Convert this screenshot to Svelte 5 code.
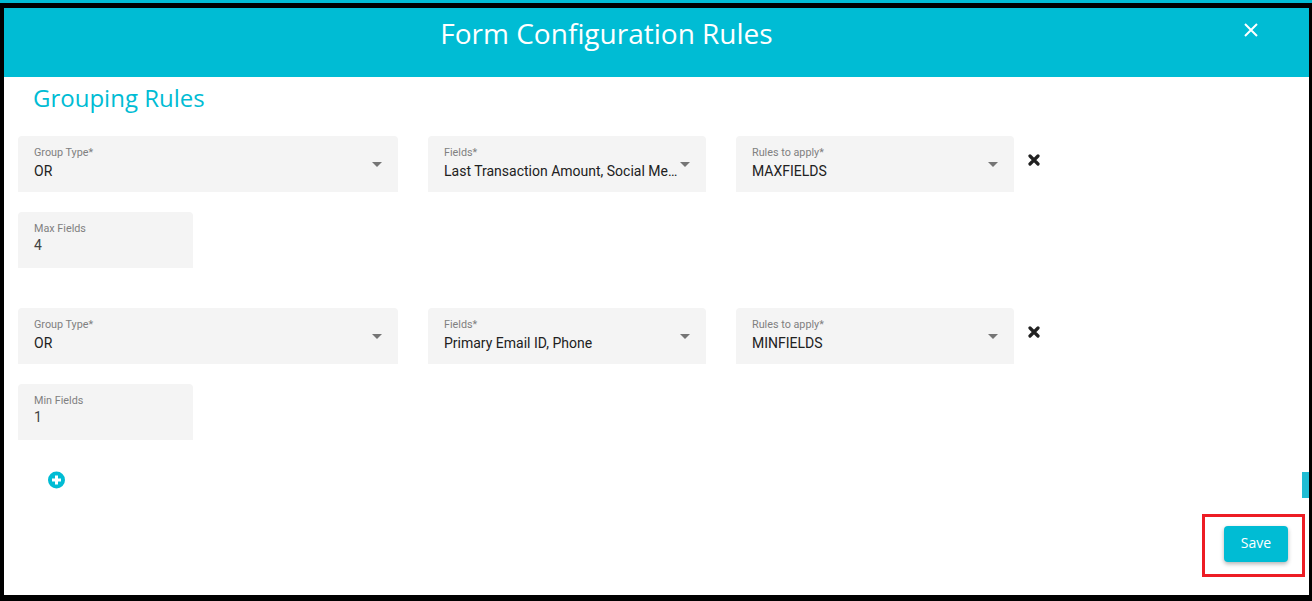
<script>
  const groups = [
    { fields: 'Last Transaction Amount, Social Me…', rule: 'MAXFIELDS', limit: 'Max Fields', value: '4' },
    { fields: 'Primary Email ID, Phone', rule: 'MINFIELDS', limit: 'Min Fields', value: '1' }
  ];
</script>

{#snippet select(label, value, cls)}
  <div class="field {cls}">
    <div class="label">{label}</div>
    <div class="value">{value}</div>
    <svg class="caret" width="10" height="5" viewBox="0 0 10 5"><path d="M0 0h10L5 5z" fill="#757575" /></svg>
  </div>
{/snippet}

<div class="strip"></div>
<main class="dialog">
  <header class="head">
    <h1>Form Configuration Rules</h1>
    <svg class="close" width="14" height="14" viewBox="0 0 14 14"><path d="M1 1l12 12M13 1L1 13" stroke="#fff" stroke-width="2" fill="none" /></svg>
  </header>
  <section class="body">
    <h2>Grouping Rules</h2>
    {#each groups as g}
      <div class="group">
        <div class="row">
          {@render select('Group Type*', 'OR', 'wide')}
          {@render select('Fields*', g.fields, 'mid')}
          {@render select('Rules to apply*', g.rule, 'mid')}
          <svg class="remove" width="12" height="12" viewBox="0 0 12 12"><path d="M2 2l8 8M10 2l-8 8" stroke="#212121" stroke-width="3.2" stroke-linecap="round" fill="none" /></svg>
        </div>
        <div class="field small">
          <div class="label">{g.limit}</div>
          <div class="value">{g.value}</div>
        </div>
      </div>
    {/each}
    <svg class="add" width="18" height="18" viewBox="0 0 18 18"><circle cx="8.5" cy="9" r="8.5" fill="#00bcd4" /><path d="M8.5 4.5v9M4 9h9" stroke="#fff" stroke-width="3" /></svg>
    <div class="foot"><button class="save">Save</button></div>
  </section>
  <div class="thumb"></div>
  <div class="mark"></div>
</main>

<style>
  :global(body) {
    margin: 0;
    background: #000;
    font-family: Roboto, "Liberation Sans", sans-serif;
  }
  .strip {
    height: 3px;
    background: #00bcd4;
  }
  .dialog {
    position: relative;
    margin: 5px 3px 0 4px;
    height: 587px;
    background: #fff;
    overflow: hidden;
  }
  .head {
    position: relative;
    height: 69px;
    background: #00bcd4;
    display: flex;
    justify-content: center;
    padding-right: 100px;
    box-sizing: border-box;
  }
  h1 {
    margin: 0;
    padding-top: 6px;
    font: 400 28px/38px "Open Sans", sans-serif;
    color: #fff;
  }
  .close {
    position: absolute;
    left: 1240px;
    top: 15px;
  }
  .body {
    padding: 0 0 0 14px;
  }
  h2 {
    margin: 0 0 6px;
    padding: 5px 0 0 15px;
    height: 53px;
    box-sizing: border-box;
    font: 400 24px/32px "Open Sans", sans-serif;
    color: #00bcd4;
  }
  .group {
    height: 172px;
  }
  .row {
    display: flex;
    align-items: flex-start;
    gap: 30px;
    margin-bottom: 20px;
  }
  .field {
    position: relative;
    height: 56px;
    box-sizing: border-box;
    padding: 10px 16px 0;
    background: #f4f4f4;
    border-radius: 4px 4px 0 0;
  }
  .wide { width: 380px; }
  .mid { width: 278px; }
  .small { width: 175px; }
  .label {
    font-size: 10.8px;
    line-height: 14px;
    color: #808080;
  }
  .value {
    margin-top: 1px;
    font-size: 14px;
    line-height: 20px;
    color: #212121;
    white-space: nowrap;
  }
  .small .value {
    margin-top: -1px;
    color: #424242;
  }
  .caret {
    position: absolute;
    right: 16px;
    top: 26px;
  }
  .remove {
    margin: 18px 0 0 -16px;
  }
  .add {
    display: block;
    margin: -9px 0 0 30px;
  }
  .foot {
    display: flex;
    justify-content: flex-end;
    padding: 37px 21px 0 0;
  }
  .save {
    width: 64px;
    height: 36px;
    padding: 0 0 4px;
    border: 0;
    border-radius: 4px;
    background: #00bcd4;
    color: #fff;
    font: 500 14px "Open Sans", sans-serif;
    box-shadow: 0 2px 4px rgba(0, 0, 0, .3);
  }
  .thumb {
    position: absolute;
    right: 0;
    top: 464px;
    width: 7px;
    height: 26px;
    background: #1fbcd3;
  }
  .mark {
    position: absolute;
    left: 1198px;
    top: 506px;
    width: 103px;
    height: 63px;
    box-sizing: border-box;
    border: 3px solid #ed1c24;
    pointer-events: none;
  }
</style>
